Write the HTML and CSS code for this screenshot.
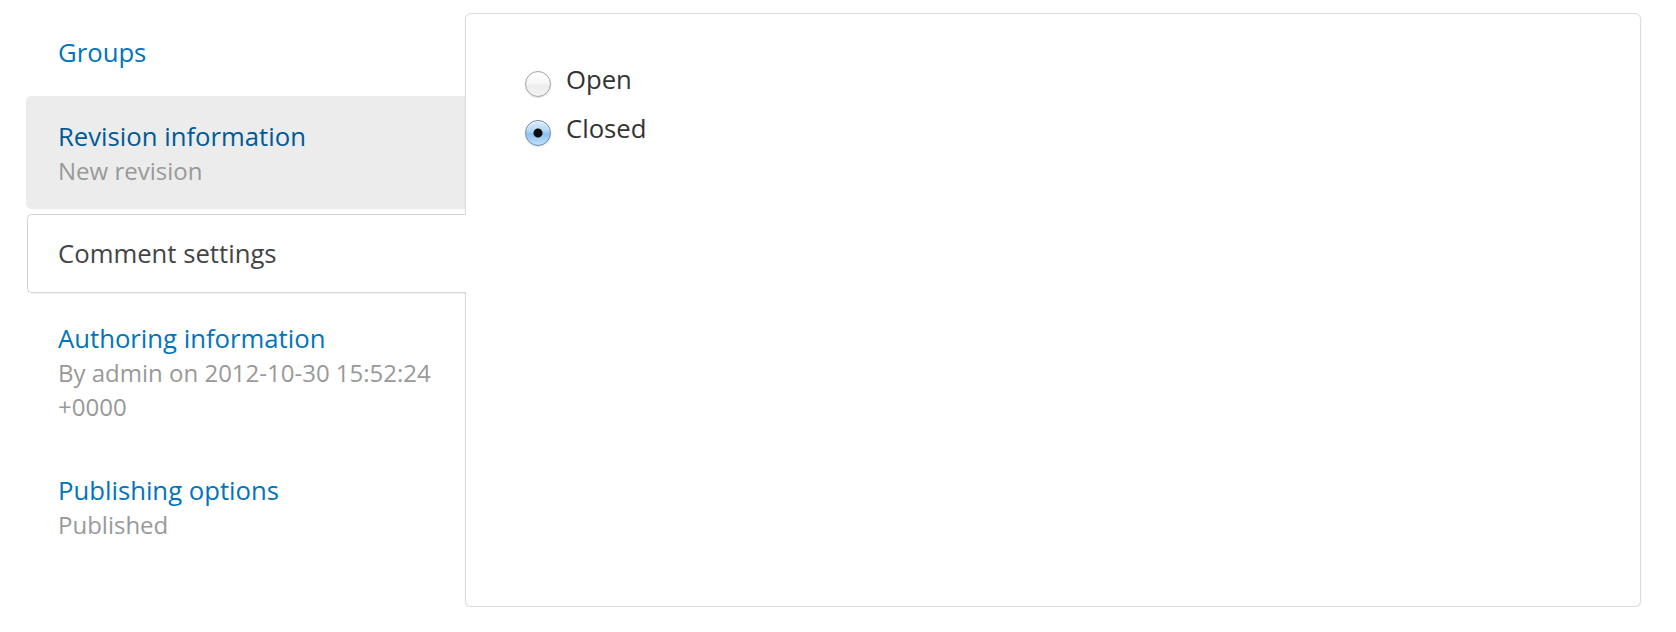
FILE: index.html
```html
<!DOCTYPE html>
<html lang="en">
<head>
<meta charset="utf-8">
<title>Vertical tabs</title>
<link rel="stylesheet" href="styles.css">
</head>
<body>
<div class="page">
  <ul class="tabs">
    <li class="tab"><a class="tab__title" href="#">Groups</a></li>
    <li class="tab tab--focus"><a class="tab__title" href="#">Revision information</a><span class="tab__summary">New revision</span></li>
    <li class="tab tab--selected"><a class="tab__title" href="#">Comment settings</a></li>
    <li class="tab"><a class="tab__title" href="#">Authoring information</a><span class="tab__summary">By admin on 2012-10-30 15:52:24 +0000</span></li>
    <li class="tab"><a class="tab__title" href="#">Publishing options</a><span class="tab__summary">Published</span></li>
  </ul>
  <div class="panel">
    <div class="options">
      <label class="option"><input class="radio" type="radio" name="comment"><span class="option__label">Open</span></label>
      <label class="option"><input class="radio" type="radio" name="comment" checked><span class="option__label">Closed</span></label>
    </div>
  </div>
</div>
</body>
</html>
```
FILE: styles.css
```css
html, body {
  margin: 0;
  padding: 0;
  background: #fff;
}
body {
  font-family: "Open Sans", "DejaVu Sans", sans-serif;
  font-size: 25.7px;
  line-height: 34px;
  color: #333;
}
.page {
  display: flex;
  align-items: flex-start;
  padding: 12px 35px 0 26px;
}
.tabs {
  list-style: none;
  margin: 0;
  padding: 0;
  width: 439px;
  flex: none;
}
.tab {
  display: flex;
  flex-direction: column;
  padding: 24px 20px 21px 32px;
  margin-bottom: 5px;
}
.tab__title {
  color: #0074bd;
  text-decoration: none;
}
.tab__summary {
  color: #999;
  font-size: 24px;
}
.tab--focus {
  background: #ececec;
  border-radius: 5px 0 0 5px;
}
.tab--focus .tab__title {
  color: #005a96;
}
.tab--selected {
  position: relative;
  z-index: 1;
  background: #fff;
  border: 1px solid #d4d4d4;
  border-right: 0;
  border-radius: 5px 0 0 5px;
  margin-left: 1px;
  margin-right: -1px;
  padding: 22px 20px 21px 30px;
  box-shadow: 0 1px 1px rgba(0, 0, 0, 0.06);
}
.tab--selected .tab__title {
  color: #444;
}
.panel {
  flex: 1;
  margin-top: 1px;
  height: 594px;
  border: 1px solid #dcdcdc;
  border-radius: 6px;
  box-shadow: 0 1px 2px rgba(0, 0, 0, 0.08);
  background: #fff;
  padding: 49px 58px 49px 59px;
  box-sizing: border-box;
}
.options {
  display: flex;
  flex-direction: column;
  gap: 15px;
}
.option {
  display: flex;
  align-items: flex-start;
  gap: 15px;
  height: 34px;
  color: #333;
}
.radio {
  appearance: none;
  -webkit-appearance: none;
  margin: 8px 0 0;
  width: 26px;
  height: 26px;
  border-radius: 50%;
  border: 1px solid #a2a2a2;
  background: linear-gradient(#ffffff 0%, #f7f7f7 45%, #ececec 60%, #f4f4f4 100%);
  box-shadow: inset 0 1px 1px rgba(255, 255, 255, 0.9), 0 1px 1px rgba(0, 0, 0, 0.1);
  box-sizing: border-box;
  flex: none;
}
.radio:checked {
  border-color: #6b87ab;
  background: radial-gradient(circle at 50% 50%, #0d0d0d 0, #0d0d0d 4px, transparent 5px),
              linear-gradient(#d9ecfc 0%, #b3d7f8 40%, #8cc1f0 55%, #bfe1fc 100%);
}
```
